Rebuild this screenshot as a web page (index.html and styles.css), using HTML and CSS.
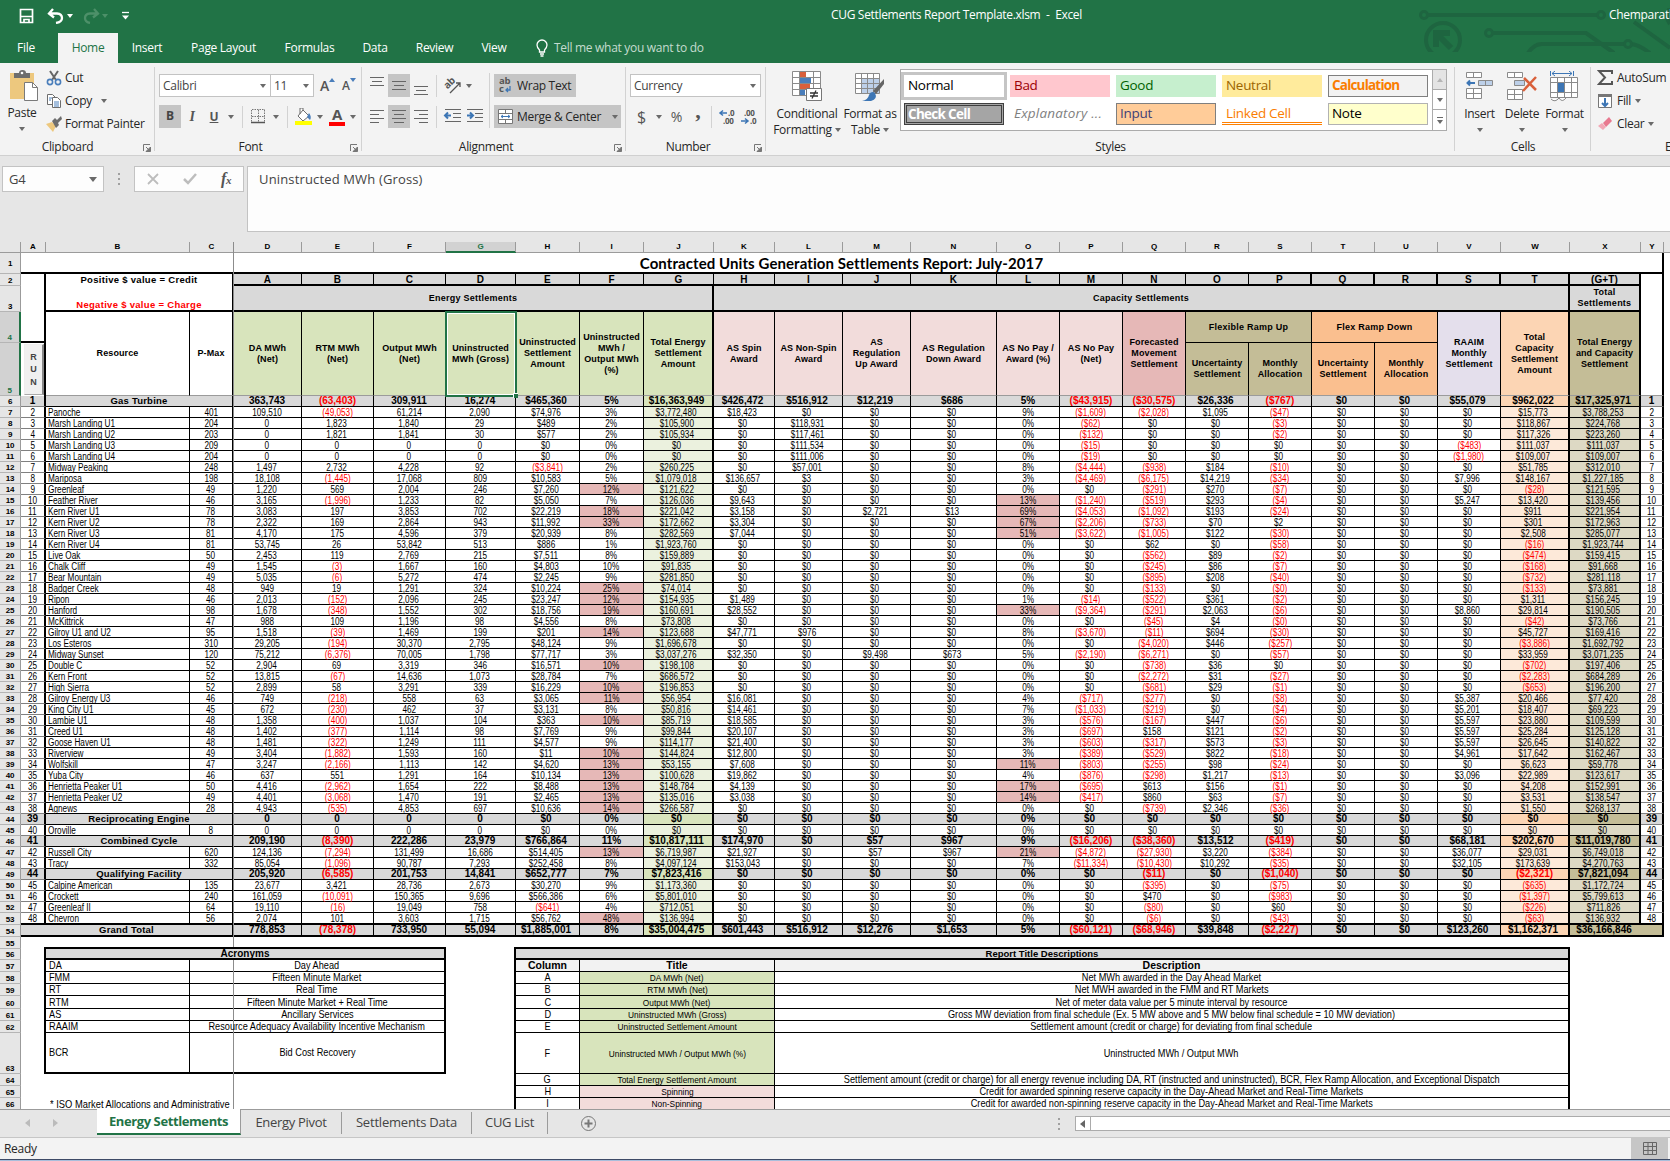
FILE: index.html
```html
<!DOCTYPE html>
<html lang="en">
<head>
<meta charset="utf-8">
<title>CUG Settlements Report Template.xlsm - Excel</title>
<link rel="stylesheet" href="styles.css">
</head>
<body>
<div class="app">
  <header class="titlebar">
    <svg class="art" width="252" height="44" viewBox="0 0 252 44" fill="none" stroke="#1e6540" stroke-width="4">
      <circle cx="6" cy="7" r="3.5" stroke-width="3"/><path d="M10 7H179"/><circle cx="183" cy="7" r="3.500" stroke-width="3"/>
      <circle cx="25" cy="32" r="17"/><path d="M33 40L20 27M18 39V25H32" stroke-width="6"/>
      <circle cx="71" cy="25" r="3.500" stroke-width="3"/><path d="M75 25H168L196 45M110 45Q116 36 124 36H206M212 36Q220 36 232 45M216 14L252 40"/><circle cx="210" cy="36" r="3.500" stroke-width="3"/><path d="M252 0Q246 8 252 16"/>
    </svg>
    <div class="qat">
      <svg width="16" height="16" viewBox="0 0 16 16" fill="none" stroke="#fff" stroke-width="1.700"><path d="M1.500 1.500h12v13h-12zM1.500 8.500h12M5 14.500v-3h5v3"/></svg>
      <svg class="undo" width="17" height="16" viewBox="0 0 17 16" fill="none" stroke="#fff" stroke-width="2.300"><path d="M6 1L2 5.500l5 4M2.500 5.500H10q5 .5 5 4.500 0 4-6 5"/></svg>
      <i class="dn white"></i>
      <svg class="redo" width="17" height="16" viewBox="0 0 17 16" fill="none" stroke="#4d9069" stroke-width="2.300"><path d="M11 1l4 4.500-5 4M14.500 5.500H7Q2 6 2 10q0 4 5 5"/></svg>
      <i class="dn dim"></i>
      <svg class="cust" width="9" height="10" viewBox="0 0 9 10"><path d="M1 1.500h7" stroke="#fff" stroke-width="1.300"/><path d="M1 4.500h7L4.500 8.500z" fill="#fff"/></svg>
    </div>
    <div class="doc">CUG Settlements Report Template.xlsm&nbsp; -&nbsp; Excel</div>
    <div class="user">Chemparathy</div>
  </header>
  <nav class="tabs">
    <span class="t-file">File</span><span class="t-home">Home</span><span class="t-ins">Insert</span><span class="t-pl">Page Layout</span><span class="t-form">Formulas</span><span class="t-data">Data</span><span class="t-rev">Review</span><span class="t-view">View</span>
    <svg width="14" height="18" viewBox="0 0 14 18" fill="none" stroke="#fff" stroke-width="1.300"><path d="M4.500 13V11Q2 8.500 2 6a5 5 0 0 1 10 0q0 2.500-2.500 5v2zM5 15h4M5.500 17h3"/></svg>
    <span class="tell">Tell me what you want to do</span>
  </nav>

  <section class="ribbon">
    <div class="group g-clip">
      <div class="body">
        <div class="big paste">
          <svg width="30" height="32" viewBox="0 0 30 32"><path d="M1 3h24v26H1z" fill="#edc87e"/><path d="M5 8V3h5q0-3 3.500-3T17 3h4v5z" fill="#6d6d6d"/><circle cx="13" cy="3" r="1.300" fill="#fff"/><path d="M15.500 12.500h8l5 5v13h-13z" fill="#fff" stroke="#7a7a7a"/><path d="M23.500 12.500v5h5" fill="none" stroke="#7a7a7a"/></svg>
          <span>Paste</span><i class="dn"></i>
        </div>
        <div class="list">
          <div><svg width="16" height="16" viewBox="0 0 16 16" fill="none" stroke-width="1.600"><path d="M4 1l6 9M12 1L6 10" stroke="#666" stroke-width="2"/><circle cx="4" cy="12" r="2.600" stroke="#4a7ebb"/><circle cx="12" cy="12" r="2.600" stroke="#4a7ebb"/></svg>Cut</div>
          <div><svg width="16" height="16" viewBox="0 0 16 16" fill="#fff" stroke="#6d6d6d"><path d="M1.500 1.500h5l3 3v7h-8z"/><path d="M6.500 4.500h5l3 3v7h-8z"/><path d="M8 9h5M8 11h5M8 13h5M3 5h3M3 7h2" stroke="#4a7ebb"/></svg>Copy<i class="dn gap"></i></div>
          <div><svg width="16" height="16" viewBox="0 0 16 16"><path d="M0 8l6-2 4 4-3 6z" fill="#edc87e"/><path d="M6 5l3-3 2 2 4-4 1 3-4 4 1 2-3 3z" fill="#6d6d6d"/></svg>Format Painter</div>
        </div>
      </div>
      <div class="label"><span>Clipboard</span><svg class="launch"><use href="#launch"/></svg></div>
    </div>

    <div class="group g-font">
      <div class="body rows">
        <div class="line">
          <div class="combo c1">Calibri<i class="dn"></i></div><div class="combo c2">11<i class="dn"></i></div>
          <span class="glyph grow">A<svg width="6" height="4"><path d="M0 4l3-4 3 4z" fill="#4a7ebb"/></svg></span>
          <span class="glyph shrink">A<svg width="6" height="4"><path d="M0 0l3 4 3-4z" fill="#4a7ebb"/></svg></span>
        </div>
        <div class="line">
          <b class="on sq">B</b><i class="ital">I</i><u class="und">U</u><i class="dn m1"></i><em class="sep s1"></em>
          <svg class="bord" width="15" height="15" viewBox="0 0 15 15" fill="none" stroke="#777"><path d="M1 .5h13M1 7.500h13M.5 1v13M7.500 1v13M13.500 1v13" stroke-dasharray="1.500 1"/><path d="M0 13.500h14" stroke="#555" stroke-width="1.500"/></svg><i class="dn m2"></i><em class="sep s2"></em>
          <svg class="fill" width="17" height="17" viewBox="0 0 17 17"><path d="M8 2l6 6-6 5-5-5zM8 2V0H5v6" fill="#fff" stroke="#6d6d6d"/><path d="M14 5q3 4 1 7l-3-3z" fill="#4a7ebb"/><path d="M0 13h17v4H0z" fill="#ff0"/></svg><i class="dn m3"></i>
          <span class="fcol">A</span><i class="dn m3"></i>
        </div>
      </div>
      <div class="label"><span>Font</span><svg class="launch"><use href="#launch"/></svg></div>
    </div>

    <div class="group g-align">
      <div class="body">
        <div class="rows left">
          <div class="line">
            <svg class="ic" viewBox="0 0 22 23"><path d="M4 3.500h14M6 7.500h10M4 11.500h14"/></svg><svg class="ic on" viewBox="0 0 22 23"><path d="M4 7.500h14M6 11.500h10M4 15.500h14"/></svg><svg class="ic" viewBox="0 0 22 23"><path d="M4 12.500h14M6 16.500h10M4 20.500h14"/></svg>
            <em class="sep s3"></em>
            <svg class="ori" width="18" height="17" viewBox="0 0 18 17"><text x="1" y="9" transform="rotate(-45 6 9)" font-size="10" font-weight="bold" fill="#555" font-family="Open Sans, sans-serif">ab</text><path d="M5 16L15 6M15 10V6h-4" fill="none" stroke="#555" stroke-width="1.300"/></svg><i class="dn m2"></i>
          </div>
          <div class="line">
            <svg class="ic" viewBox="0 0 22 23"><path d="M4 5.500h14M4 9.500h9M4 13.500h14M4 17.500h9"/></svg><svg class="ic on" viewBox="0 0 22 23"><path d="M4 5.500h14M6 9.500h10M4 13.500h14M6 17.500h10"/></svg><svg class="ic" viewBox="0 0 22 23"><path d="M4 5.500h14M9 9.500h9M4 13.500h14M9 17.500h9"/></svg>
            <em class="sep s3"></em>
            <svg class="ic" viewBox="0 0 22 23"><path d="M3 4.500h16M11 8.500h8M11 12.500h8M3 16.500h16"/><path d="M3 10.500h6M6 7.500l-3 3 3 3" stroke="#3d76b5" stroke-width="2"/></svg><svg class="ic" viewBox="0 0 22 23"><path d="M3 4.500h16M11 8.500h8M11 12.500h8M3 16.500h16"/><path d="M3 10.500h6M6 7.500l3 3-3 3" stroke="#3d76b5" stroke-width="2"/></svg>
          </div>
        </div>
        <em class="sep tall"></em>
        <div class="rows">
          <div class="line"><div class="on wide wrap"><svg width="16" height="17" viewBox="0 0 16 17"><text x="1" y="7" font-size="9.500" font-weight="bold" fill="#555" font-family="Open Sans, sans-serif">ab</text><text x="1" y="15" font-size="9.500" font-weight="bold" fill="#555" font-family="Open Sans, sans-serif">c</text><path d="M12 9v4H8M10 11l-2 2 2 2" fill="none" stroke="#3d76b5" stroke-width="1.300"/></svg>Wrap Text</div></div>
          <div class="line"><div class="on wide merge"><svg width="16" height="16" viewBox="0 0 16 16" fill="#fff" stroke="#777"><path d="M.5.5h14v14H.5zM.5 4.500h14M.5 10.500h14M7.500.5v4M7.500 10.500v4"/><path d="M3 7.500h9M5 6L3 7.500 5 9M10 6l2 1.500L10 9" stroke="#3d76b5" fill="none"/></svg>Merge &amp; Center<i class="dn"></i></div></div>
        </div>
      </div>
      <div class="label"><span>Alignment</span><svg class="launch"><use href="#launch"/></svg></div>
    </div>

    <div class="group g-num">
      <div class="body rows">
        <div class="line"><div class="combo c3">Currency<i class="dn"></i></div></div>
        <div class="line num"><span class="dol">$</span><i class="dn"></i><span class="pct">%</span><span class="com">,</span><em class="sep s4"></em>
          <svg width="17" height="16" viewBox="0 0 17 16" class="dec"><text x="9" y="7">.0</text><text x="4" y="15">.00</text><path d="M1 4h7M4 1.500L1 4l3 2.500" fill="none" stroke="#3d76b5" stroke-width="1.500"/></svg>
          <svg width="17" height="16" viewBox="0 0 17 16" class="dec d2"><text x="3" y="7">.00</text><text x="9" y="15">.0</text><path d="M0 12h7M4 9.500L7 12l-3 2.500" fill="none" stroke="#3d76b5" stroke-width="1.500"/></svg>
        </div>
      </div>
      <div class="label"><span>Number</span><svg class="launch"><use href="#launch"/></svg></div>
    </div>

    <div class="group g-styles">
      <div class="body">
        <div class="big cf">
          <svg width="30" height="32" viewBox="0 0 30 32"><path d="M.5.500h28v24H.5z" fill="#fff" stroke="#8a8a8a"/><path d="M8 1h6v6H8zM8 13h10v5H8z" fill="#d9603b"/><path d="M8 7h11v6H8zM8 18h5v6H8z" fill="#4a7ebb"/><path d="M7.500 0v24M21.500 0v24M.5 6.500h28M.5 12.500h28M.5 18.500h28" stroke="#8a8a8a" fill="none"/><path d="M14.500 17.500h15v12h-15z" fill="#fff" stroke="#777"/><path d="M18 22h8M18 25h8M24 19.500l-4 8" stroke="#333" stroke-width="1.300"/></svg>
          <span>Conditional</span><span>Formatting<i class="dn"></i></span>
        </div>
        <div class="big ft">
          <svg width="30" height="32" viewBox="0 0 30 32"><path d="M.5 2.500h24v20H.5z" fill="#fff"/><path d="M7 8h18v14H7z" fill="#bdd0e9"/><path d="M.5 2.500h24v20H.5zM6.500 2v20M12.500 2v20M18.500 2v20M.5 7.500h24M.5 12.500h24M.5 17.500h24" stroke="#8a8a8a" fill="none"/><path d="M29 8L18 20l3 3 8-10z" fill="#666"/><path d="M7 30q6-1 7-6 2-5 6-2 3 6-4 8z" fill="#3d76b5"/></svg>
          <span>Format as</span><span>Table<i class="dn"></i></span>
        </div>
        <div class="gallery">
          <div class="cells">
            <span class="st normal">Normal</span><span class="st bad">Bad</span><span class="st good">Good</span><span class="st neutral">Neutral</span><span class="st calc">Calculation</span>
            <span class="st check">Check Cell</span><span class="st expl">Explanatory ...</span><span class="st input">Input</span><span class="st linked">Linked Cell</span><span class="st note">Note</span>
          </div>
          <div class="scroll"><span class="off"><i class="up"></i></span><span><i class="dn"></i></span><span class="more"><i class="dn"></i></span></div>
        </div>
      </div>
      <div class="label"><span>Styles</span></div>
    </div>

    <div class="group g-cells">
      <div class="body">
        <div class="big b1"><svg width="28" height="32" viewBox="0 0 28 32" fill="#fff" stroke="#8a8a8a"><path d="M.5 1.500h15v5H.5zM7.500 1v6M.5 17.500h15v10H.5zM7.500 17v10M.5 22.500h15"/><path d="M12.500 9.500h14v5h-14zM19.500 9v6" fill="#bdd0e9"/><path d="M1 12h8M4 9.500L1.500 12 4 14.500" stroke="#3d76b5" stroke-width="2" fill="none"/></svg><span>Insert</span><i class="dn"></i></div>
        <div class="big b2"><svg width="31" height="32" viewBox="0 0 31 32" fill="#fff" stroke="#8a8a8a"><path d="M.5 1.500h15v5H.5zM7.500 1v6M.5 18.500h15v10H.5zM7.500 18v10M.5 23.500h15"/><path d="M7.500 9.500h10v5h-10z" fill="#bdd0e9"/><path d="M17 7l12 12M29 6L16 20" stroke="#d9603b" stroke-width="2.500"/></svg><span>Delete</span><i class="dn"></i></div>
        <div class="big b3"><svg width="29" height="32" viewBox="0 0 29 32" fill="#fff" stroke="#8a8a8a"><path d="M.5 6.500h27v20H.5zM7.500 6v20M14.500 6v20M21.500 6v20M.5 11.500h27M.5 21.500h27M1 28q4 4 8-1 3 5 7 0"/><path d="M7.500 11.500h7v10h-7z" fill="#3d76b5"/><path d="M.5 0v5M23.500 0v5M2 2.500h20M5 0L2 2.500 5 5M19 0l3 2.500L19 5" stroke="#3d76b5" fill="none"/></svg><span>Format</span><i class="dn"></i></div>
      </div>
      <div class="label"><span>Cells</span></div>
    </div>

    <div class="group g-edit">
      <div class="body">
        <div class="list">
          <div><svg width="16" height="16" viewBox="0 0 16 16" fill="none" stroke="#555" stroke-width="2"><path d="M15 4V1H2l6 6.500L2 14h13v-3"/></svg>AutoSum</div>
          <div><svg width="16" height="16" viewBox="0 0 16 16" fill="#fff" stroke="#777"><path d="M1.500 1.500h13v13h-13z"/><path d="M1 1h14v3H1z" fill="#777" stroke="none"/><path d="M8 5v8M5 10l3 3 3-3" stroke="#3d76b5" stroke-width="2" fill="none"/></svg>Fill<i class="dn"></i></div>
          <div><svg width="16" height="16" viewBox="0 0 16 16"><path d="M6 7l6-6 3 4-6 6z" fill="#e8798f"/><path d="M1 10l4-3 4 4-3 3z" fill="#f2a7b5"/></svg>Clear<i class="dn"></i></div>
        </div>
      </div>
      <div class="label"><span>Editing</span></div>
    </div>
  </section>

  <section class="fbar">
    <div class="namebox">G4<i class="dn"></i></div>
    <div class="dots"></div>
    <div class="fbtns">
      <svg width="12" height="12" viewBox="0 0 12 12" stroke="#bdbdbd" stroke-width="1.800"><path d="M1 1l10 10M11 1L1 11"/></svg>
      <svg width="14" height="12" viewBox="0 0 14 12" fill="none" stroke="#bdbdbd" stroke-width="2.500"><path d="M1 6l4 4 8-9"/></svg>
      <span class="fx">f<small>x</small></span>
    </div>
    <div class="formula">Uninstructed MWh (Gross)</div>
  </section>

  <main class="sheet" id="sheet">
    <div class="r colhead" id="colhead"></div>
    <div class="r r1"><span class="rh">1</span><span class="title">Contracted Units Generation Settlements Report: July-2017</span></div>
    <div class="r head" id="head">
      <span class="rh h2">2</span><span class="rh h3">3</span><span class="rh h4 sel">4</span><span class="rh h5 sel">5</span>
      <div class="a-top"></div>
      <div class="a-run"><button class="run">R<br>U<br>N</button></div>
      <div class="legend"><span>Positive $ value = Credit</span><span class="neg">Negative $ value = Charge</span></div>
      <div class="k k-b">Resource</div><div class="k k-c">P-Max</div>
      <div class="k energy">Energy Settlements</div><div class="k capacity">Capacity Settlements</div><div class="k totals">Total<br>Settlements</div>
      <div class="k ramp rup">Flexible Ramp Up</div><div class="k ramp rdown">Flex Ramp Down</div>
      <div class="y-top"></div>
      <div class="cursor"><i></i></div>
    </div>
    <div class="freeze-v"></div>
  </main>

  <footer class="sheets">
    <i class="tri l"></i><i class="tri rr"></i>
    <span class="active">Energy Settlements</span><span class="s-a">Energy Pivot</span><span class="s-b">Settlements Data</span><span class="s-c">CUG List</span>
    <svg class="plus" width="17" height="17" viewBox="0 0 17 17" fill="none" stroke="#777"><circle cx="8.500" cy="8.500" r="7"/><path d="M8.500 4.500v8M4.500 8.500h8" stroke-width="2"/></svg>
    <div class="dots"></div>
    <div class="hscroll"><span><i class="tri l dark"></i></span></div>
  </footer>
  <div class="status"><span>Ready</span><div class="view"><svg width="14" height="13" viewBox="0 0 14 13" fill="none" stroke="#666"><path d="M.5.500h13v12H.5zM5 0v13M9.500 0v13M0 4.500h14M0 8.500h14"/></svg></div></div>
  <div class="edge"></div>
</div>
<svg width="0" height="0" class="defs"><symbol id="launch" viewBox="0 0 8 8"><path d="M.5 7V.5H7" fill="none" stroke="#777"/><path d="M3 3l3 3M7.500 3v4.500H3z" fill="#777" stroke="#777"/></symbol></svg>
<script src="sheet.js"></script>
</body>
</html>
```
FILE: styles.css
```css
* { box-sizing: border-box; }
body { margin: 0; width: 1670px; height: 1161px; overflow: hidden; background: #e6e6e6; font: 12px/16px "Open Sans", "Noto Sans", sans-serif; color: #262626; letter-spacing: -0.3px; }
.app { display: flex; flex-direction: column; height: 1161px; }
.defs { position: absolute; }
svg { flex: none; }
.dn { display: inline-block; flex: none; border: 3px solid transparent; border-top: 4px solid #6a6a6a; border-bottom: 0; width: 0; height: 0; }
.up { border: 3px solid transparent; border-bottom: 4px solid #b5b5b5; border-top: 0; }
.dn.white { border-top-color: #fff; }
.dn.dim { border-top-color: #4d9069; }

.titlebar { position: relative; display: flex; height: 33px; flex: none; background: #217346; color: #fff; }
.art { position: absolute; left: 1418px; top: 8px; }
.qat { display: flex; align-items: center; flex: none; width: 831px; padding: 0 0 2px 19px; }
.undo { margin-left: 12px; margin-right: 3px; }
.redo { margin-left: 10px; margin-right: 2px; }
.cust { margin-left: 13px; }
.doc { flex: none; width: 778px; line-height: 30px; white-space: nowrap; letter-spacing: -.32px; }
.user { position: relative; line-height: 30px; white-space: nowrap; }
.tabs { display: flex; flex: none; height: 30px; line-height: 30px; background: #217346; color: #fff; text-align: center; }
.tabs span { position: relative; white-space: nowrap; }
.tabs svg { margin: 6px 5px 0 14px; }
.t-file { width: 52px; margin-right: 6px; }
.t-home { width: 60px; background: #f3f3f3; color: #217346; }
.t-ins { width: 58px; } .t-pl { width: 95px; } .t-form { width: 77px; } .t-data { width: 54px; } .t-rev { width: 65px; } .t-view { width: 54px; }
.tell { color: #c5dccf; }

.ribbon { display: flex; flex: none; height: 93px; background: #f3f3f3; border-bottom: 1px solid #d0d0d0; }
.group { position: relative; display: flex; flex-direction: column; flex: none; height: 88px; margin-top: 4px; }
.group::after { content: ""; position: absolute; right: 0; top: 0; width: 1px; height: 84px; background: #d2d2d2; }
.body { display: flex; height: 72px; flex: none; }
.rows { flex-direction: column; padding-top: 7px; gap: 8px; }
.left, .rows { display: flex; }
.line { display: flex; align-items: center; height: 23px; }
.label { display: flex; justify-content: center; align-items: center; height: 16px; position: relative; }
.launch { position: absolute; right: 4px; top: 5px; width: 8px; height: 8px; }
.g-clip { width: 155px; } .g-font { width: 207px; } .g-align { width: 264px; } .g-num { width: 140px; } .g-styles { width: 689px; } .g-cells { width: 136px; } .g-edit { width: 79px; }
.g-edit::after { display: none; }
.g-clip .label { padding-right: 20px; } .g-font .label { padding-right: 16px; } .g-align .label { padding-right: 16px; } .g-num .label { padding-right: 16px; }
.g-edit .label { padding-left: 74px; justify-content: flex-start; }
.big { display: flex; flex-direction: column; align-items: center; padding-top: 3px; }
.big svg { margin-bottom: 2px; }
.big span { white-space: nowrap; height: 16px; line-height: 17px; }
.big .dn { margin-top: 7px; }
.big span .dn { margin: 0 0 2px 3px; }
.paste { width: 44px; }
.paste svg { margin-left: 4px; }
.list { display: flex; flex-direction: column; padding-left: 2px; }
.list div { display: flex; align-items: center; height: 23px; gap: 3px; white-space: nowrap; padding-bottom: 1px; }
.list .gap { margin-left: 6px; }
.combo { display: flex; align-items: center; justify-content: space-between; height: 23px; border: 1px solid #c3c3c3; background: #fff; padding: 0 4px 0 3px; color: #444; }
.c1 { width: 112px; margin-left: 4px; } .c2 { width: 43px; border-left: 0; } .c3 { width: 131px; margin-left: 4px; }
.glyph { display: flex; font-size: 14px; color: #555; font-weight: 600; align-items: center; }
.glyph svg { margin-bottom: 11px; }
.grow { margin-left: 6px; } .shrink { margin-left: 7px; font-size: 12px; }
.on { background: #c5c5c5; }
.sq { width: 22px; height: 23px; margin-left: 4px; line-height: 22px; text-align: center; color: #444; }
.ital { width: 22px; text-align: center; font: italic bold 14px "Liberation Serif", serif; color: #555; }
.und { width: 22px; text-align: center; font-weight: 700; color: #555; }
.m1 { margin-left: 3px; }
.sep { width: 1px; height: 22px; background: #d2d2d2; flex: none; }
.s1 { margin: 0 8px 0 8px; } .m2 { margin-left: 7px; } .s2 { margin: 0 7px 0 8px; } .m3 { margin: 0 6px 0 5px; }
.fcol { width: 16px; height: 18px; border-bottom: 4px solid #f00; font-size: 15px; font-weight: 700; line-height: 13px; text-align: center; color: #555; }
.g-align .left { width: 127px; padding-left: 4px; }
.ic { width: 22px; height: 23px; fill: none; stroke: #666; stroke-width: 1; }
.s3 { margin: 0 5px 0 4px; }
.ori { margin-left: 3px; overflow: visible; } .ori + .dn { margin-left: 3px; }
.tall { height: 55px; margin: 6px 4px 0 0; }
.wide { display: flex; align-items: center; height: 23px; padding-left: 4px; gap: 3px; white-space: nowrap; }
.wide svg { overflow: visible; }
.wrap { width: 82px; } .merge { width: 127px; } .merge .dn { margin-left: 8px; }
.num { color: #555; }
.dol { font-size: 16px; margin: 0 10px 0 11px; } .pct { font-size: 14px; margin-left: 9px; } .com { font: bold 22px/12px "Liberation Serif", serif; margin: -12px 0 0 13px; }
.s4 { margin-left: 11px; }
.dec { margin-left: 7px; font: bold 8px "Open Sans", sans-serif; fill: #555; overflow: visible; } .d2 { margin-left: 5px; }
.g-styles .big, .g-cells .big { padding-top: 4px; }
.cf { width: 82px; } .ft { width: 44px; margin-right: 8px; }
.gallery { display: flex; width: 547px; height: 62px; margin-top: 2px; border: 1px solid #ababab; background: #fff; }
.cells { display: grid; grid-template-columns: repeat(5, 100px); grid-template-rows: 22px 22px; gap: 6px; padding: 5px 0 0 3px; width: 531px; }
.st { font-size: 13.5px; line-height: 21px; padding-left: 4px; white-space: nowrap; }
.normal { outline: 3px solid #c5c5c5; color: #000; }
.bad { background: #ffc7ce; color: #9c0006; } .good { background: #c6efce; color: #006100; } .neutral { background: #ffeb9c; color: #9c6500; }
.calc { background: #f2f2f2; color: #fa7d00; border: 1px solid #7f7f7f; font-weight: 700; line-height: 19px; padding-left: 3px; letter-spacing: -.8px; }
.check { background: #a5a5a5; color: #fff; border: 3px double #3f3f3f; font-weight: 700; line-height: 16px; padding-left: 1px; letter-spacing: -.7px; }
.expl { color: #7f7f7f; font-style: italic; letter-spacing: .2px; }
.input { background: #ffcc99; color: #3f3f76; border: 1px solid #7f7f7f; line-height: 19px; padding-left: 3px; }
.linked { color: #fa7d00; border-bottom: 3px double #ff8001; }
.note { background: #ffffcc; color: #000; border: 1px solid #b2b2b2; line-height: 19px; padding-left: 3px; }
.scroll { display: grid; grid-template-rows: 20px 20px 20px; width: 14px; border-left: 1px solid #ababab; }
.scroll span { display: flex; align-items: center; justify-content: center; border-bottom: 1px solid #ababab; }
.scroll .off { background: #e4e4e4; }
.scroll .more { border: 0; flex-direction: column; gap: 2px; }
.scroll .more::before { content: ""; width: 6px; height: 1px; background: #6a6a6a; }
.b1 { width: 49px; } .b2 { width: 36px; } .b3 { width: 49px; }
.g-edit .list { padding-left: 6px; } .g-edit .list div { gap: 4px; }

.fbar { display: flex; flex: none; height: 86px; padding-top: 10px; align-items: flex-start; font-size: 13px; color: #444; }
.namebox { display: flex; align-items: center; justify-content: space-between; width: 102px; height: 26px; margin-left: 2px; border: 1px solid #c3c3c3; background: #fdfdfd; padding: 0 6px; }
.namebox .dn { border-width: 5px 4px 0; }
.dots { width: 2px; height: 12px; margin: 7px 14px 0; background: repeating-linear-gradient(#a0a0a0 0 2px, transparent 2px 5px); }
.fbtns { display: flex; align-items: center; width: 110px; height: 26px; border: 1px solid #c3c3c3; background: #fdfdfd; gap: 24px; padding-left: 12px; }
.fx { font: italic bold 16px/20px "Liberation Serif", serif; color: #555; } .fx small { font-size: 11px; }
.formula { flex: 1; height: 66px; margin-left: 3px; border: 1px solid #c3c3c3; border-right: 0; background: #fdfdfd; padding: 4px 11px; letter-spacing: .15px; }

.sheet { position: relative; flex: none; height: 867px; overflow: hidden; background: #fff; font: 10px/10px "Liberation Sans", sans-serif; color: #000; letter-spacing: 0; }
.r { display: grid; grid-template-columns: 21px 25px 144px 44px 68px 72px 72px 70px 64px 64px 70px 61px 68px 68px 86px 63px 63px 63px 63px 63px 63px 63px 63px 69px 71px 23px 6px; white-space: nowrap; }
.c, .rh, .k { display: flex; align-items: center; justify-content: center; min-width: 0; }
.x { transform: translateY(1px) scaleX(.82); }
.colhead { height: 11px; background: #e6e6e6; border-bottom: 1px solid #9b9b9b; }
.colhead span { display: flex; justify-content: center; align-items: center; border-right: 1px solid #9b9b9b; font: bold 8px/10px "Liberation Sans", sans-serif; }
.colhead .pick { background: #d2d2d2; color: #217346; box-shadow: 0 1px 0 #217346, inset 0 -1px 0 #217346; }
.rh { grid-column: 1; background: #e6e6e6; border-right: 1px solid #9b9b9b; border-bottom: 1px solid #b5b5b5; font: bold 8px/9px "Liberation Sans", sans-serif; align-items: flex-end; letter-spacing: -.3px; }
.rh.sel { background: #d2d2d2; color: #217346; border-right: 2px solid #217346; }
.r1 { height: 21px; }
.title { grid-column: 2 / 27; display: flex; align-items: center; justify-content: center; border-right: 2px solid #000; border-bottom: 2px solid #000; font: bold 15px/18px Lato, "Open Sans", sans-serif; letter-spacing: .08px; }
.r1 .rh { align-items: center; }
.head { grid-template-rows: 12px 26px 31px 53px; position: relative; font: bold 9px/11px "Liberation Sans", sans-serif; letter-spacing: .1px; }
.h2 { grid-row: 1; } .h3 { grid-row: 2; } .h4 { grid-row: 3; } .h5 { grid-row: 4; }
.a-top { grid-column: 2; grid-row: 1 / 4; border-right: 2px solid #000; border-bottom: 2px solid #000; }
.a-run { grid-column: 2; grid-row: 4; border-right: 2px solid #000; padding: 1px 0 1px 3px; display: flex; }
.run { flex: 1; border: 1px solid #aaa; border-left-color: #eee; border-top-color: #eee; border-right: 2px solid #888; background: #f0f0f0; padding: 0; font: bold 9px/12.500px "Liberation Sans", sans-serif; color: #444; }
.legend { grid-column: 3 / 5; grid-row: 1 / 3; display: flex; flex-direction: column; justify-content: space-between; align-items: center; border-right: 2px solid #000; border-bottom: 2px solid #000; font-size: 9.5px; letter-spacing: .3px; }
.neg { color: #f00; }
.k { border-right: 1px solid #000; border-bottom: 1px solid #000; text-align: center; }
.k-b, .k-c { grid-row: 3 / 5; } .k-b { grid-column: 3; } .k-c { grid-column: 4; border-right-width: 2px; }
.ltr { grid-row: 1; background: #d9d9d9; border-bottom-width: 2px; font-size: 10px; }
.energy, .capacity, .totals { grid-row: 2; background: #d9d9d9; border-bottom-width: 2px; border-right-width: 2px; letter-spacing: .25px; }
.energy { grid-column: 5 / 12; }
.capacity { grid-column: 12 / 25; }
.totals { grid-column: 25; }
.ramp { grid-row: 3; letter-spacing: .25px; }
.rup { grid-column: 19 / 21; background: #c4bd97; } .rdown { grid-column: 21 / 23; background: #fabf8f; }
.full { grid-row: 3 / 5; } .half { grid-row: 4; }
.thick { border-right-width: 2px; }
.head .k-b, .head .k-c, .head .full, .head .half, .y-top { border-bottom: 1px solid #9b9b9b; }
.y-top { grid-column: 26; grid-row: 1 / 5; border-right: 2px solid #000; }
.cursor { position: absolute; left: 445px; top: 37px; width: 72px; height: 86px; border: 2px solid #217346; box-shadow: inset 0 0 0 1px #fff; }
.cursor i { position: absolute; right: -3px; bottom: -3px; width: 5px; height: 5px; background: #217346; border: solid #fff; border-width: 1px 0 0 1px; }
.g { background: #d8e4bc; } .p { background: #f2dcdb; } .rose { background: #e6b8b7; } .ol { background: #c4bd97; } .or { background: #fabf8f; } .lav { background: #e4dfec; } .pe { background: #fcd5b4; }
.freeze-v { position: absolute; left: 233px; top: 0; width: 1px; height: 867px; background: #8c8c8c; }

.d { height: 11px; }
.d .c { border-right: 1px solid #000; border-bottom: 1px solid #000; }
.d .c.idx { border-color: #808080; border-right: 2px solid #000; }
.d .c.tk { border-right-width: 2px; }
.d .name { justify-content: flex-start; padding-left: 2px; }
.name .x, .ac .x { transform-origin: left; }
.d .money { padding-right: 3px; }
.d .int { padding-right: 1px; }
.d .c.neg { padding: 0; }
.colJ { background: #ebf1de; } .colW { background: #fde9d9; } .colX { background: #ddd9c4; }
.hot { background: #e6b8b7; }
.bold .c { background: #d9d9d9; font: bold 10px/10px "Liberation Sans", sans-serif; }
.bold .x { transform: none; }
.bold .cat { font-size: 9.5px; letter-spacing: .2px; }
.bold .colJ { background: #d8e4bc; } .bold .colW { background: #fcd5b4; } .bold .colX { background: #c4bd97; }
.last, .grand { height: 12px; }
.last .c, .grand .c { border-bottom: 2px solid #000 !important; }
.grand .colX { padding-right: 24px; }

.n { font-size: 10.5px; line-height: 11px; }
.n .x { transform: scaleX(.875); }
.n .c { border-right: 1px solid #000; border-bottom: 1px solid #000; }
.n .ac { grid-column: 3; justify-content: flex-start; padding-left: 3px; box-shadow: -2px 0 0 #000; }
.n .ad { grid-column: 4 / 8; border-right: 2px solid #000; }
.n .dc { grid-column: 9; box-shadow: -2px 0 0 #000; }
.n .dt { grid-column: 10 / 13; background: #d8e4bc; font-size: 9.5px; }
.n .dd { grid-column: 13 / 25; border-right: 2px solid #000; }
.n .hd { background: #d9d9d9; border-right: 2px solid #000; border-bottom: 2px solid #000; font: bold 10px/9px "Liberation Sans", sans-serif; box-shadow: -2px 0 0 #000, 0 -2px 0 #000, -2px -2px 0 #000; position: relative; }
.n .hd .x, .n.th .dc .x, .n.th .dt .x, .n.th .dd .x { transform: none; }
.n .h-a { grid-column: 3 / 8; } .n .h-d { grid-column: 9 / 25; font-size: 9.5px; }
.n.th .dc, .n.th .dt, .n.th .dd { background: #f2f2f2; font: bold 10.5px/11px "Liberation Sans", sans-serif; }
.n.pink .dt { background: #f2dcdb; }
.n .bot { border-bottom-width: 2px; }
.foot { grid-column: 3 / 5; padding-left: 4px; display: flex; align-items: center; }
.n .foot .x { transform: scaleX(.89); transform-origin: left; }

.sheets { display: flex; flex: none; height: 29px; border-top: 1px solid #9b9b9b; border-bottom: 1px solid #c6c6c6; font-size: 13px; line-height: 25px; color: #444; white-space: nowrap; }
.tri { width: 0; height: 0; border: 4px solid transparent; flex: none; }
.tri.l { border-right: 5px solid #bbb; border-left: 0; margin: 9px 0 0 25px; }
.tri.rr { border-left: 5px solid #bbb; border-right: 0; margin: 9px 0 0 23px; }
.active { width: 144px; margin: -1px 0 0 39px; height: 26px; background: #fff; border-right: 1px solid #9b9b9b; border-bottom: 2px solid #217346; color: #217346; font-weight: 700; text-align: center; letter-spacing: -.4px; }
.s-a, .s-b, .s-c { height: 22px; margin-top: 2px; line-height: 21px; text-align: center; border-right: 1px solid #9b9b9b; }
.s-a { width: 101px; } .s-b { width: 130px; letter-spacing: -.2px; } .s-c { width: 76px; }
.plus { margin: 5px 0 0 32px; }
.sheets .dots { margin: 8px 15px 0 461px; }
.hscroll { flex: 1; height: 15px; margin-top: 6px; border: 1px solid #ababab; border-right: 0; background: #fff; }
.hscroll span { display: block; width: 15px; height: 13px; border-right: 1px solid #ababab; }
.tri.l.dark { border-right-color: #666; margin: 0 0 0 4px; display: block; position: relative; top: 3px; }
.status { display: flex; justify-content: space-between; flex: none; height: 21px; background: #f3f3f3; padding: 0 2px 0 4px; line-height: 21px; }
.view { width: 37px; background: #c6c6c6; display: flex; align-items: center; justify-content: center; }
.edge { flex: none; height: 2px; background: #a9bedb; border-top: 1px solid #3d4a66; }
```
FILE: sheet.js
```js
const sheet = document.getElementById('sheet');
const el = (cls, html, parent, col) => {
  const e = document.createElement('div');
  e.className = cls;
  e.innerHTML = html;
  if (col) e.style.gridColumn = col;
  parent.appendChild(e);
  return e;
};
const cell = (cls, text, parent, col) => el(cls, `<span class="x">${text}</span>`, parent, col);

// Column letters
const letters = 'ABCDEFGHIJKLMNOPQRSTUVWXY'.split('');
document.getElementById('colhead').innerHTML = '<span></span>' +
  letters.map(l => `<span${l === 'G' ? ' class="pick"' : ''}>${l}</span>`).join('');

// Report header: label, fill, lower-row flag
const head = document.getElementById('head');
const heads = [
  ['DA MWh<br>(Net)', 'g'], ['RTM MWh<br>(Net)', 'g'], ['Output MWh<br>(Net)', 'g'],
  ['Uninstructed<br>MWh (Gross)', 'g'], ['Uninstructed<br>Settlement<br>Amount', 'g'],
  ['Uninstructed<br>MWh /<br>Output MWh<br>(%)', 'g'], ['Total Energy<br>Settlement<br>Amount', 'g thick'],
  ['AS Spin<br>Award', 'p'], ['AS Non-Spin<br>Award', 'p'], ['AS<br>Regulation<br>Up Award', 'p'],
  ['AS Regulation<br>Down Award', 'p'], ['AS No Pay /<br>Award (%)', 'p'], ['AS No Pay<br>(Net)', 'p'],
  ['Forecasted<br>Movement<br>Settlement', 'rose'], ['Uncertainty<br>Settlement', 'ol', 1],
  ['Monthly<br>Allocation', 'ol', 1], ['Uncertainty<br>Settlement', 'or', 1], ['Monthly<br>Allocation', 'or', 1],
  ['RAAIM<br>Monthly<br>Settlement', 'lav'], ['Total<br>Capacity<br>Settlement<br>Amount', 'pe thick'],
  ['Total Energy<br>and Capacity<br>Settlement', 'ol thick']
];
heads.forEach(([text, fill, half], i) => {
  const edge = [15, 16, 17, 18, 19, 20].includes(i) ? ' thick' : '';
  el('k ltr' + edge, i === 20 ? '(G+T)' : letters[i], head, i + 5);
  el(`k ${half ? 'half' : 'full'} ${fill}`, text, head, i + 5);
});

// index|resource|p-max|D..S V W X   ("!" marks a highlighted percentage)
const data = `1|Gas Turbine||363743 -63403 309911 16274 465360 5 16363949 426472 516912 12219 686 5 -43915 -30575 26336 -767 55079 962022 17325971
2|Panoche|401|109510 -49053 61214 2090 74976 3 3772480 18423 0 0 0 9 -1609 -2028 1095 -47 0 15773 3788253
3|Marsh Landing U1|204|0 1823 1840 29 489 2 105900 0 118931 0 0 0 -62 0 0 -3 0 118867 224768
4|Marsh Landing U2|203|0 1821 1841 30 577 2 105934 0 117461 0 0 0 -132 0 0 -2 0 117326 223260
5|Marsh Landing U3|209|0 0 0 0 0 0 0 0 111534 0 0 0 -15 0 0 0 -483 111037 111037
6|Marsh Landing U4|204|0 0 0 0 0 0 0 0 111006 0 0 0 -19 0 0 0 -1980 109007 109007
7|Midway Peaking|248|1497 2732 4228 92 -3841 2 260225 0 57001 0 0 8 -4444 -938 184 -10 0 51785 312010
8|Mariposa|198|18108 -1445 17068 809 10583 5 1079018 136657 3 0 0 3 -4469 -6175 14219 -34 7996 148167 1227185
9|Greenleaf|49|1220 569 2004 246 7260 12! 121622 0 0 0 0 0 0 -291 270 -7 0 -28 121595
10|Feather River|46|3165 -1996 1233 82 5050 7 126036 9643 0 0 0 13! -1240 -519 293 -4 5247 13420 139456
11|Kern River U1|78|3083 197 3853 702 22219 18! 221042 3158 0 2721 13 69! -4053 -1092 193 -24 0 911 221954
12|Kern River U2|78|2322 169 2864 943 11992 33! 172662 3304 0 0 0 67! -2206 -733 70 2 0 301 172963
13|Kern River U3|81|4170 175 4596 379 20939 8 282569 7044 0 0 0 51! -3622 -1005 122 -30 0 2508 285077
14|Kern River U4|81|53745 26 53842 513 886 1 1923760 0 0 0 0 0 0 62 0 -58 0 -16 1923744
15|Live Oak|50|2453 119 2769 215 7511 8 159889 0 0 0 0 0 0 -562 89 -2 0 -474 159415
16|Chalk Cliff|49|1545 -3 1667 160 4803 10 91835 0 0 0 0 0 0 -245 86 -7 0 -168 91668
17|Bear Mountain|49|5035 -6 5272 474 2245 9 281850 0 0 0 0 0 0 -895 208 -40 0 -732 281118
18|Badger Creek|48|949 19 1291 324 10224 25! 74014 0 0 0 0 0 0 -133 0 -0 0 -133 73881
19|Ripon|46|2013 -152 2096 245 23247 12! 154935 1489 0 0 0 1 -14 -522 361 -2 0 1311 156245
20|Hanford|98|1678 -348 1552 302 18756 19! 160691 28552 0 0 0 33! -9364 -291 2063 -6 8860 29814 190505
21|McKittrick|47|988 109 1196 98 4556 8 73808 0 0 0 0 0 0 -45 4 -0 0 -42 73766
22|Gilroy U1 and U2|95|1518 -39 1469 199 201 14! 123688 47771 976 0 0 8 -3670 -11 694 -30 0 45727 169416
23|Los Esteros|310|29205 -194 30370 2795 48124 9 1696678 0 0 0 0 0 0 -4020 446 -257 0 -3886 1692792
24|Midway Sunset|120|75212 -6376 70005 1798 77717 3 3037276 32350 0 9498 673 5 -2190 -6271 0 -57 0 33959 3071235
25|Double C|52|2904 69 3319 346 16571 10! 198108 0 0 0 0 0 0 -738 36 0 0 -702 197406
26|Kern Front|52|13815 -67 14636 1073 28784 7 686572 0 0 0 0 0 0 -2272 31 -27 0 -2283 684289
27|High Sierra|52|2899 58 3291 339 16229 10! 196853 0 0 0 0 0 0 -681 29 -1 0 -653 196200
28|Gilroy Energy U3|46|749 -218 558 63 3065 11! 56954 16081 0 0 0 4 -717 -277 0 -8 5387 20466 77420
29|King City U1|45|672 -230 462 37 3131 8 50816 14461 0 0 0 7 -1033 -219 0 -4 5201 18407 69223
30|Lambie U1|48|1358 -400 1037 104 363 10! 85719 18585 0 0 0 3 -576 -167 447 -6 5597 23880 109599
31|Creed U1|48|1402 -377 1114 98 7769 9 99844 20107 0 0 0 3 -697 158 121 -2 5597 25284 125128
32|Goose Haven U1|48|1481 -322 1249 111 4577 9 114177 21400 0 0 0 3 -603 -317 573 -3 5597 26645 140822
33|Riverview|49|3404 -1882 1593 160 11 10! 144824 12800 0 0 0 3 -389 -529 822 -18 4961 17642 162467
34|Wolfskill|47|3247 -2166 1113 142 4620 13! 53155 7608 0 0 0 11! -803 -255 98 -24 0 6623 59778
35|Yuba City|46|637 551 1291 164 10134 13! 100628 19862 0 0 0 4 -876 -298 1217 -13 3096 22989 123617
36|Henrietta Peaker U1|50|4416 -2962 1654 222 8488 13! 148784 4139 0 0 0 17! -695 613 156 -1 0 4208 152991
37|Henrietta Peaker U2|49|4401 -3068 1470 191 2465 13! 135016 3038 0 0 0 14! -417 860 63 -7 0 3531 138547
38|Agnews|28|4943 -535 4853 697 10636 14! 266587 0 0 0 0 0 0 -739 2346 -36 0 1550 268137
39|Reciprocating Engine||0 0 0 0 0 0 0 0 0 0 0 0 0 0 0 0 0 0 0
40|Oroville|8|0 0 0 0 0 0 0 0 0 0 0 0 0 0 0 0 0 0 0
41|Combined Cycle||209190 -8390 222286 23979 766864 11 10817111 174970 0 57 967 9 -16206 -38360 13512 -419 68181 202670 11019780
42|Russell City|620|124136 -7294 131499 16686 514405 13! 6719987 21927 0 57 967 21! -4872 -27930 3220 -384 36077 29031 6749018
43|Tracy|332|85054 -1096 90787 7293 252458 8 4097124 153043 0 0 0 7 -11334 -10430 10292 -35 32105 173639 4270763
44|Qualifying Facility||205920 -6585 201753 14841 652777 7 7823416 0 0 0 0 0 0 -11 0 -1040 0 -2321 7821094
45|Calpine American|135|23677 3421 28736 2673 30270 9 1173360 0 0 0 0 0 0 -395 0 -75 0 -635 1172724
46|Crockett|240|161059 -10091 150365 9696 566386 6 5801010 0 0 0 0 0 0 470 0 -983 0 -1397 5799613
47|Greenleaf II|64|19110 -16 19049 758 -641 4 712051 0 0 0 0 0 0 -80 0 60 0 -226 711826
48|Chevron|56|2074 101 3603 1715 56762 48! 136994 0 0 0 0 0 0 -6 0 -43 0 -63 136932
|Grand Total||778853 -78378 733950 55094 1885001 8 35004475 601443 516912 12276 1653 5 -60121 -68946 39848 -2227 123260 1162371 36166846`;

data.split('\n').forEach((line, n) => {
  const [idx, name, pmax, rest] = line.split('|');
  const vals = rest.split(' ');
  vals.splice(16, 0, '0', '0');
  const grand = !idx;
  const row = el('r d' + (pmax ? '' : ' bold') + (idx === '48' ? ' last' : '') + (grand ? ' grand' : ''), '', sheet);
  el('rh', n + 6, row);
  if (grand) cell('c cat tk', name, row, '2 / 5');
  else {
    cell('c idx', idx, row, 2);
    if (pmax) { cell('c name', name, row, 3); cell('c tk', pmax, row, 4); }
    else cell('c cat tk', name, row, '3 / 5');
  }
  vals.forEach((v, i) => {
    const letter = letters[i + 3];
    const neg = v[0] === '-';
    const num = Number(v.replace(/[-!]/g, '')).toLocaleString('en-US');
    let text, kind;
    if (letter === 'I' || letter === 'O') { text = num + '%'; kind = ''; }
    else if (i < 4) { text = num; kind = 'int'; }
    else { text = '$' + num; kind = 'money'; }
    if (neg) text = `(${text})`;
    const cls = ['c', kind, 'col' + letter];
    if (neg) cls.push('neg');
    if (v.endsWith('!')) cls.push('hot');
    if ('JWX'.includes(letter)) cls.push('tk');
    cell(cls.join(' '), text, row, grand && letter === 'X' ? '25 / 27' : i + 5);
  });
  if (!grand) cell('c idx', idx, row, 26);
});

// Notes: row number, height, acronym, meaning, column, title, description
const notes = [
  [55, 12], [56, 11],
  [57, 12, 'DA', 'Day Ahead', 'Column', 'Title', 'Description'],
  [58, 12, 'FMM', 'Fifteen Minute Market', 'A', 'DA MWh (Net)', 'Net MWh awarded in the Day Ahead Market'],
  [59, 12, 'RT', 'Real Time', 'B', 'RTM MWh (Net)', 'Net MWH awarded in the FMM and RT Markets'],
  [60, 13, 'RTM', 'Fifteen Minute Market + Real Time', 'C', 'Output MWh (Net)', 'Net of meter data value per 5 minute interval by resource'],
  [61, 12, 'AS', 'Ancillary Services', 'D', 'Uninstructed MWh (Gross)', 'Gross MW deviation from final schedule (Ex. 5 MW above and 5 MW below final schedule = 10 MW deviation)'],
  [62, 12, 'RAAIM', 'Resource Adequacy Availability Incentive Mechanism', 'E', 'Uninstructed Settlement Amount', 'Settlement amount (credit or charge) for deviating from final schedule'],
  [63, 41, 'BCR', 'Bid Cost Recovery', 'F', 'Uninstructed MWh / Output MWh (%)', 'Uninstructed MWh / Output MWh'],
  [64, 12, '', '', 'G', 'Total Energy Settlement Amount', 'Settlement amount (credit or charge) for all energy revenue including DA, RT (instructed and uninstructed), BCR, Flex Ramp Allocation, and Exceptional Dispatch'],
  [65, 12, '', '', 'H', 'Spinning', 'Credit for awarded spinning reserve capacity in the Day-Ahead Market and Real-Time Markets'],
  [66, 11, '', '', 'I', 'Non-Spinning', 'Credit for awarded non-spinning reserve capacity in the Day-Ahead Market and Real-Time Markets']
];
notes.forEach(([no, h, a, m, c, t, d]) => {
  const row = el('r n' + (no === 57 ? ' th' : '') + (no > 64 ? ' pink' : ''), '', sheet);
  row.style.height = h + 'px';
  el('rh', no, row);
  if (no === 56) { cell('c hd h-a', 'Acronyms', row); cell('c hd h-d', 'Report Title Descriptions', row); }
  const bot = no === 63 ? ' bot' : '';
  if (a) { cell('c ac' + bot, a, row); cell('c ad' + bot, m, row); }
  if (no === 66) cell('foot', '* ISO Market Allocations and Administrative', row);
  if (c) { cell('c dc', c, row); cell('c dt', t, row); cell('c dd', d, row); }
});
```
